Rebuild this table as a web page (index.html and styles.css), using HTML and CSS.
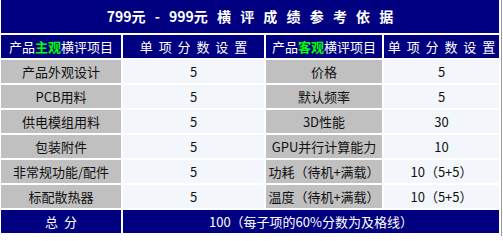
FILE: index.html
```html
<!DOCTYPE html>
<html lang="zh">
<head>
<meta charset="utf-8">
<link rel="stylesheet" href="styles.css">
</head>
<body>
<div class="wrap">
<table class="score">
  <tr><td class="title" colspan="4">799元 - 999元 横 评 成 绩 参 考 依 据</td></tr>
  <tr class="head">
    <td class="c1">产品<b class="hl">主观</b>横评项目</td>
    <td class="c2 sp">单 项 分 数 设 置</td>
    <td class="c3">产品<b class="hl">客观</b>横评项目</td>
    <td class="c4 sp">单 项 分 数 设 置</td>
  </tr>
  <tr><td class="name">产品外观设计</td><td class="val">5</td><td class="name">价格</td><td class="val">5</td></tr>
  <tr><td class="name">PCB用料</td><td class="val">5</td><td class="name">默认频率</td><td class="val">5</td></tr>
  <tr><td class="name">供电模组用料</td><td class="val">5</td><td class="name">3D性能</td><td class="val">30</td></tr>
  <tr><td class="name">包装附件</td><td class="val">5</td><td class="name">GPU并行计算能力</td><td class="val">10</td></tr>
  <tr><td class="name">非常规功能/配件</td><td class="val">5</td><td class="name">功耗（待机+满载）</td><td class="val">10（5+5）</td></tr>
  <tr><td class="name">标配散热器</td><td class="val">5</td><td class="name">温度（待机+满载）</td><td class="val">10（5+5）</td></tr>
  <tr class="total"><td class="sp">总 分</td><td colspan="3">100（每子项的60%分数为及格线）</td></tr>
</table>
</div>
</body>
</html>
```

FILE: styles.css
```css
html, body {
  margin: 0;
  padding: 0;
  background: #ffffff;
}
.wrap {
  width: 501px;
  height: 236px;
  border-right: 1px solid #9a9a9a;
  overflow: hidden;
}
.score {
  border-collapse: separate;
  border-spacing: 2px;
  margin: -2px 0 0 -1px;
  table-layout: fixed;
  font-family: "Noto Sans CJK SC", "DejaVu Sans", sans-serif;
  font-size: 13px;
  color: #111;
}
.score td {
  padding: 0;
  height: 23px;
  text-align: center;
  white-space: nowrap;
  overflow: visible;
  line-height: 23px;
}
.score .title {
  height: 33px;
  line-height: 33px;
  background: #000080;
  color: #ffffff;
  font-weight: bold;
  font-size: 14px;
  word-spacing: 6px;
}
.c1 { width: 120px; }
.c2 { width: 141px; }
.c3 { width: 116px; }
.c4 { width: 115px; }
.head td {
  background: #000080;
  color: #ffffff;
}
.hl {
  color: #00ff00;
  font-weight: bold;
}
.sp {
  word-spacing: 3px;
}
.name {
  background: #c0c0c0;
}
.val {
  background: #f3f7fb;
}
.total td {
  background: #000080;
  color: #ffffff;
}
```
